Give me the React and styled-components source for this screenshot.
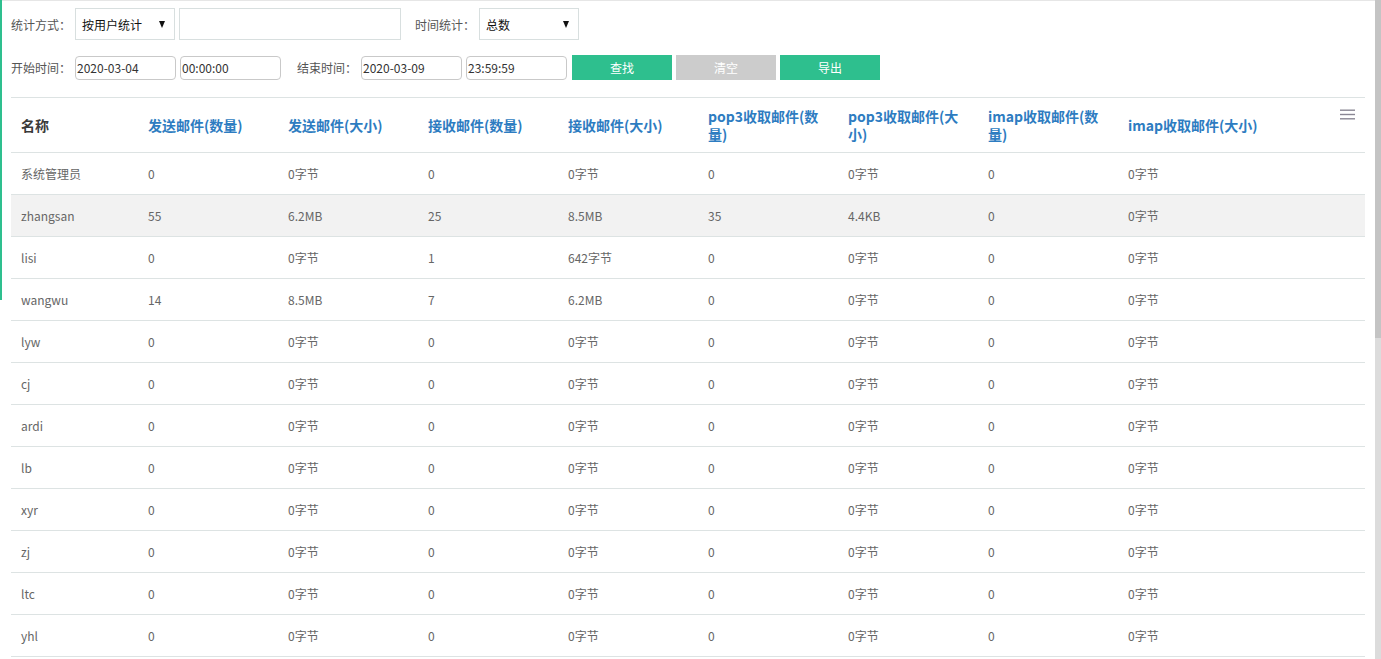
import React from 'react';
import styled, { createGlobalStyle } from 'styled-components';

const GlobalStyle = createGlobalStyle`
    body {
        margin: 0;
        background: #ffffff;
        font-family: "Noto Sans CJK SC", "Noto Sans", sans-serif;
        font-size: 12px;
        color: #555;
        overflow: hidden;
    }
`;

const Frame = styled.div`
    display: flex;
    height: 659px;
`;

const Page = styled.div`
    position: relative;
    flex: 1;
    border-top: 1px solid #e6e6e6;
    margin-left: 2px;
    padding: 7px 4px 0 9px;

    &::before {
        content: "";
        position: absolute;
        left: -2px;
        top: -1px;
        width: 2px;
        height: 300px;
        background: #2ebf8e;
    }
`;

const ScrollTrack = styled.div`
    width: 6px;
    background: #dcdcdc;
`;

const ScrollThumb = styled.div`
    height: 338px;
    background: #c4c4c4;
`;

const FormRow = styled.div`
    display: flex;
    align-items: center;
    height: ${p => p.h}px;
    margin-bottom: ${p => p.mb || 0}px;
`;

const Label = styled.span`
    font-size: 12px;
    color: #555;
    white-space: nowrap;
    margin-left: ${p => p.ml || 0}px;
    margin-right: ${p => p.mr || 4}px;
`;

const SelectBox = styled.div`
    box-sizing: border-box;
    width: ${p => p.w}px;
    height: 32px;
    border: 1px solid #d8dfdf;
    display: flex;
    align-items: center;
    justify-content: space-between;
    padding: 0 9px 0 6px;
    font-size: 12px;
    color: #111;
    background: #fff;

    &::after {
        content: "";
        border-left: 3.5px solid transparent;
        border-right: 3.5px solid transparent;
        border-top: 7px solid #111;
    }
`;

const TextBox = styled.div`
    box-sizing: border-box;
    width: 222px;
    height: 32px;
    border: 1px solid #d8dfdf;
    margin-left: 4px;
    background: #fff;
`;

const TimeInput = styled.div`
    box-sizing: border-box;
    width: 101px;
    height: 24px;
    border: 1px solid #c9c9c9;
    border-radius: 4px;
    padding-left: 1px;
    display: flex;
    align-items: center;
    font-size: 12px;
    color: #333;
    margin-left: ${p => p.ml || 0}px;
`;

const Button = styled.div`
    width: 100px;
    height: 25px;
    display: flex;
    align-items: center;
    justify-content: center;
    color: #fff;
    font-size: 12px;
    background: ${p => (p.gray ? '#cccccc' : '#2ebf8e')};
    margin-left: ${p => p.ml || 4}px;
    cursor: pointer;
`;

const TableWrap = styled.div`
    position: relative;
    margin-top: 17px;
    width: 1354px;
`;

const Table = styled.table`
    width: 1354px;
    border-collapse: collapse;
    table-layout: fixed;
    border-top: 1px solid #dde3e3;
`;

const Th = styled.th`
    height: 54px;
    padding: 0 10px;
    text-align: left;
    vertical-align: middle;
    font-size: 14px;
    line-height: 18px;
    font-weight: bold;
    color: ${p => (p.dark ? '#3a3a3a' : '#2d7cc1')};
    border-bottom: 1px solid #dde3e3;
`;

const Row = styled.tr`
    background: ${p => (p.hover ? '#f2f2f2' : 'transparent')};
`;

const Td = styled.td`
    height: 41px;
    padding: 0 10px;
    font-size: 12px;
    color: #666;
    border-bottom: 1px solid #dde3e3;
    white-space: nowrap;
`;

const MenuIcon = styled.svg`
    position: absolute;
    right: 10px;
    top: 12px;
`;

const columns = [
    { title: '名称', w: 127, dark: true },
    { title: '发送邮件(数量)', w: 140 },
    { title: '发送邮件(大小)', w: 140 },
    { title: '接收邮件(数量)', w: 140 },
    { title: '接收邮件(大小)', w: 140 },
    { title: 'pop3收取邮件(数量)', w: 140 },
    { title: 'pop3收取邮件(大小)', w: 140 },
    { title: 'imap收取邮件(数量)', w: 140 },
    { title: 'imap收取邮件(大小)', w: 247 },
];

const zero = ['0', '0字节', '0', '0字节', '0', '0字节', '0', '0字节'];

const rows = [
    ['系统管理员', ...zero],
    ['zhangsan', '55', '6.2MB', '25', '8.5MB', '35', '4.4KB', '0', '0字节'],
    ['lisi', '0', '0字节', '1', '642字节', '0', '0字节', '0', '0字节'],
    ['wangwu', '14', '8.5MB', '7', '6.2MB', '0', '0字节', '0', '0字节'],
    ['lyw', ...zero],
    ['cj', ...zero],
    ['ardi', ...zero],
    ['lb', ...zero],
    ['xyr', ...zero],
    ['zj', ...zero],
    ['ltc', ...zero],
    ['yhl', ...zero],
];

export default function App() {
    return (
        <>
            <GlobalStyle />
            <Frame>
                <Page>
                    <FormRow h={32} mb={15}>
                        <Label>统计方式：</Label>
                        <SelectBox w={100}>按用户统计</SelectBox>
                        <TextBox />
                        <Label ml={14}>时间统计：</Label>
                        <SelectBox w={100}>总数</SelectBox>
                    </FormRow>
                    <FormRow h={25}>
                        <Label>开始时间：</Label>
                        <TimeInput>2020-03-04</TimeInput>
                        <TimeInput ml={4}>00:00:00</TimeInput>
                        <Label ml={16}>结束时间：</Label>
                        <TimeInput>2020-03-09</TimeInput>
                        <TimeInput ml={4}>23:59:59</TimeInput>
                        <Button ml={5}>查找</Button>
                        <Button gray>清空</Button>
                        <Button>导出</Button>
                    </FormRow>
                    <TableWrap>
                        <Table>
                            <colgroup>
                                {columns.map(c => <col key={c.title} style={{ width: c.w }} />)}
                            </colgroup>
                            <thead>
                                <tr>
                                    {columns.map(c => (
                                        <Th key={c.title} dark={c.dark}>{c.title}</Th>
                                    ))}
                                </tr>
                            </thead>
                            <tbody>
                                {rows.map((r, i) => (
                                    <Row key={r[0]} hover={i === 1}>
                                        {r.map((v, j) => <Td key={j}>{v}</Td>)}
                                    </Row>
                                ))}
                            </tbody>
                        </Table>
                        <MenuIcon width="15" height="11" viewBox="0 0 15 11">
                            <rect x="0" y="0.5" width="15" height="1.4" fill="#8a8794" />
                            <rect x="0" y="4.8" width="15" height="1.4" fill="#8a8794" />
                            <rect x="0" y="9.1" width="15" height="1.4" fill="#8a8794" />
                        </MenuIcon>
                    </TableWrap>
                </Page>
                <ScrollTrack>
                    <ScrollThumb />
                </ScrollTrack>
            </Frame>
        </>
    );
}
